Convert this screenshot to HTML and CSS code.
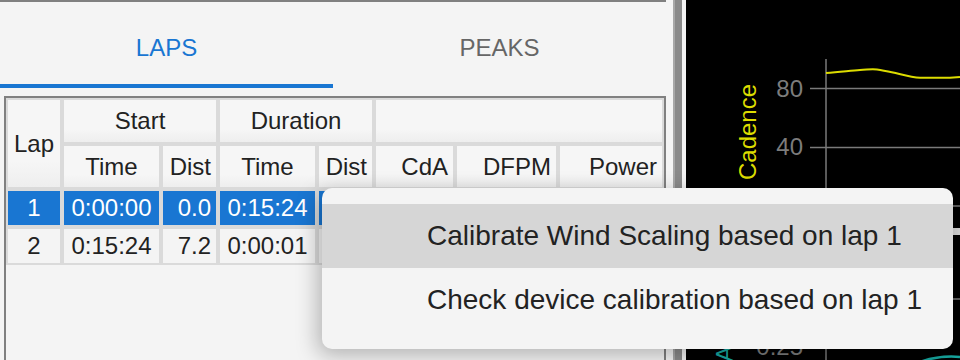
FILE: index.html
```html
<!DOCTYPE html>
<html lang="en">
<head>
  <meta charset="UTF-8" />
  <title>Laps</title>
  <link rel="stylesheet" href="styles.css">
</head>
<body>

  <!-- Left side: laps / peaks -->
  <div class="side-panel">
    <div class="tabs">
      <div class="tab active">LAPS</div>
      <div class="tab">PEAKS</div>
    </div>

    <div class="table-box">
      <table class="laps">
        <colgroup>
          <col class="c-lap"><col class="c-time"><col class="c-dist">
          <col class="c-time"><col class="c-dist">
          <col class="c-cda"><col class="c-dfpm"><col class="c-power">
        </colgroup>
        <thead>
          <tr class="head-top">
            <th rowspan="2">Lap</th>
            <th colspan="2">Start</th>
            <th colspan="2">Duration</th>
            <th colspan="3"></th>
          </tr>
          <tr class="head-sub">
            <th>Time</th>
            <th class="num">Dist</th>
            <th>Time</th>
            <th class="num">Dist</th>
            <th class="num">CdA</th>
            <th class="num">DFPM</th>
            <th class="num">Power</th>
          </tr>
        </thead>
        <tbody>
          <!-- columns under the popup are left blank -->
          <tr class="selected">
            <td>1</td>
            <td>0:00:00</td>
            <td class="num">0.0</td>
            <td>0:15:24</td>
            <td class="num"></td>
            <td class="num"></td>
            <td class="num"></td>
            <td class="num"></td>
          </tr>
          <tr>
            <td>2</td>
            <td>0:15:24</td>
            <td class="num">7.2</td>
            <td>0:00:01</td>
            <td class="num"></td>
            <td class="num"></td>
            <td class="num"></td>
            <td class="num"></td>
          </tr>
        </tbody>
      </table>
    </div>
  </div>

  <!-- Splitter -->
  <div class="splitter"><div class="splitter-bar"></div></div>

  <!-- Chart -->
  <div class="chart">
    <svg class="chart-svg" width="274" height="360" viewBox="0 0 274 360">
      <text class="axis-title cadence" transform="translate(70 132) rotate(-90)" text-anchor="middle">Cadence</text>
      <text class="tick-label" x="117" y="97" text-anchor="end">80</text>
      <text class="tick-label" x="117" y="155" text-anchor="end">40</text>
      <text class="tick-label" x="117" y="355" text-anchor="end">0.25</text>
      <text class="axis-title cda" transform="translate(47 346) rotate(-90)" text-anchor="end">CdA</text>

      <line class="grid" x1="124" y1="88.5" x2="274" y2="88.5" />
      <line class="grid" x1="124" y1="147.5" x2="274" y2="147.5" />
      <line class="grid" x1="124" y1="206" x2="274" y2="206" />
      <line class="grid" x1="124" y1="299" x2="274" y2="299" />
      <line class="grid" x1="140" y1="59" x2="140" y2="360" />
      <rect class="marker" x="267" y="228" width="7" height="7" />

      <path class="line-cadence" d="M140 73 C155 72 165 70.5 174 70 S186 68.8 191 69.5 S200 71 207 72.5 S225 77.5 234 77.8 L264 77.8 L274 77" />
      <path class="line-cda" d="M231 363 Q252 355 274 357" />
    </svg>
  </div>

  <!-- Context menu -->
  <div class="context-menu">
    <div class="menu-item hover">Calibrate Wind Scaling based on lap 1</div>
    <div class="menu-item">Check device calibration based on lap 1</div>
  </div>

</body>
</html>
```

FILE: styles.css
```css
/* Base styling */
html, body {
  margin: 0;
  height: 360px;
}
body {
  display: flex;
  overflow: hidden;
  background: #f4f4f4;
  font-family: "Liberation Sans", Arial, sans-serif;
  color: #222;
}

/* Left panel */
.side-panel {
  width: 666px;
  height: 360px;
  display: flex;
  flex-direction: column;
  border-top: 2px solid #808080;
  box-sizing: border-box;
}
.tabs {
  display: flex;
}
.tab {
  flex: 1;
  text-align: center;
  font-size: 24px;
  color: #666;
  padding-top: 10px;
  line-height: 72px;
  border-bottom: 4px solid transparent;
}
.tab.active {
  color: #1976d2;
  border-bottom-color: #1976d2;
}

/* Laps table */
.table-box {
  flex: 1;
  margin: 8px 0 0 4px;
  border: 2px solid #808080;
  border-bottom: none;
  background: #f4f4f4;
}
.laps {
  width: 100%;
  table-layout: fixed;
  border-collapse: separate;
  border-spacing: 0;
  font-size: 24px;
}
.c-lap { width: 56px; }
.c-time { width: 99px; }
.c-dist { width: 57px; }
.c-cda { width: 81px; }
.c-dfpm { width: 103px; }
.c-power { width: 106px; }

.laps th,
.laps td {
  border: 2px solid #dadada;
  padding: 0 5px;
  text-align: center;
  font-weight: normal;
  white-space: nowrap;
  overflow: hidden;
}
.laps th {
  background: linear-gradient(#f6f6f6 70%, #eeeeee);
}
.laps .num {
  text-align: right;
}
.head-top th {
  height: 42px;
}
.head-sub th {
  height: 41px;
}
.laps td {
  height: 34px;
  background: #f4f4f4;
}
.laps tr.selected td {
  background: #1976d2;
  color: #fff;
}

/* Splitter between panels */
.splitter {
  width: 20px;
  display: flex;
  padding-left: 7px;
  box-sizing: border-box;
}
.splitter-bar {
  width: 9px;
  background: #8a8a8a;
  border-left: 2px solid #a8a8a8;
  box-sizing: border-box;
}

/* Chart */
.chart {
  flex: 1;
  background: #000;
}
.chart-svg {
  display: block;
}
.axis-title {
  font-family: "Liberation Sans", Arial, sans-serif;
  font-size: 24px;
}
.cadence {
  fill: #dcdc00;
}
.cda {
  fill: #17a8a0;
}
.tick-label {
  font-family: "Liberation Sans", Arial, sans-serif;
  font-size: 24px;
  fill: #7c7c7c;
}
.grid {
  stroke: #7a7a7a;
  stroke-width: 1.5;
}
.marker {
  fill: #d4d4d4;
}
.line-cadence {
  fill: none;
  stroke: #dcdc00;
  stroke-width: 2;
}
.line-cda {
  fill: none;
  stroke: #17a8a0;
  stroke-width: 2.5;
}

/* Context menu popup */
.context-menu {
  position: absolute;
  left: 322px;
  top: 188px;
  width: 631px;
  padding: 16px 0 17px;
  background: #f4f4f4;
  border-radius: 10px;
  box-shadow: -4px 6px 22px rgba(0, 0, 0, 0.28);
  font-size: 28px;
  color: #222;
}
.menu-item {
  height: 64px;
  line-height: 64px;
  padding-left: 105px;
}
.menu-item.hover {
  background: #d6d6d6;
}
```
